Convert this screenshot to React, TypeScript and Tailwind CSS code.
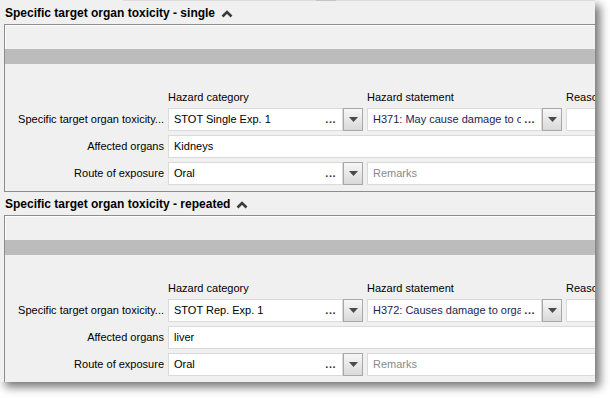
import React from "react";

const FONT = "font-['Liberation_Sans',Arial,sans-serif]";

function Chevron() {
  return (
    <svg width="12" height="9" viewBox="0 0 12 9" className="ml-[6px] mt-[1px]">
      <polyline points="1.5,7.5 6,3 10.5,7.5" fill="none" stroke="#3a3a3a" strokeWidth="2.6" />
    </svg>
  );
}

function DropButton() {
  return (
    <div className="flex h-full w-[20px] shrink-0 items-center justify-center border border-[#a8a8a8] bg-gradient-to-b from-[#f7f7f7] to-[#d9d9d9]">
      <svg width="9" height="5" viewBox="0 0 9 5">
        <polygon points="0,0 9,0 4.5,5" fill="#4a4a4a" />
      </svg>
    </div>
  );
}

function Combo({ value, tone = "text-black" }: { value: string; tone?: string }) {
  return (
    <div className="flex h-[23px] w-[195px]">
      <div className="flex min-w-0 flex-1 items-center border border-[#dadada] bg-white pl-[5px] pr-[6px]">
        <span className={`min-w-0 flex-1 overflow-hidden whitespace-nowrap ${tone}`}>{value}</span>
        <span className="ml-[3px] font-bold tracking-[0.5px] text-[#333]">...</span>
      </div>
      <DropButton />
    </div>
  );
}

function TextBox({ value, placeholder }: { value?: string; placeholder?: string }) {
  return (
    <div className="flex h-[23px] items-center border border-[#dadada] bg-white pl-[5px]">
      {value ? <span>{value}</span> : <span className="text-[#8a8a8a]">{placeholder}</span>}
    </div>
  );
}

function Section({
  title,
  category,
  statement,
  organ,
}: {
  title: string;
  category: string;
  statement: string;
  organ: string;
}) {
  return (
    <section>
      <div className="flex h-[23px] items-center pl-[5px] text-[12px] font-bold text-black">
        <span>{title}</span>
        <Chevron />
      </div>
      <div className="ml-[4px] w-[720px] border border-[#8d8d8d] bg-[#f0f0f0]">
        <div className="h-[24px] border-l border-t border-white" />
        <div className="h-[15px] bg-[#bcbcbc]" />
        <div className="grid grid-cols-[159px_195px_195px_1fr] gap-x-[4px] gap-y-[4px] pb-[6px] pt-[26px] text-[11px] text-black">
          <div />
          <div className="h-[14px] leading-[14px]">Hazard category</div>
          <div className="h-[14px] leading-[14px]">Hazard statement</div>
          <div className="h-[14px] leading-[14px]">Reason for no classification</div>

          <div className="flex items-center justify-end">Specific target organ toxicity...</div>
          <Combo value={category} />
          <Combo value={statement} tone="text-[#1d1d4f]" />
          <TextBox placeholder="" />

          <div className="flex items-center justify-end">Affected organs</div>
          <div className="col-span-3">
            <TextBox value={organ} />
          </div>

          <div className="flex items-center justify-end">Route of exposure</div>
          <Combo value="Oral" />
          <div className="col-span-2">
            <TextBox placeholder="Remarks" />
          </div>
        </div>
      </div>
    </section>
  );
}

export default function App() {
  return (
    <div className={`h-[398px] w-[610px] overflow-hidden bg-white ${FONT}`}>
      <div className="h-[382px] w-[595px] overflow-hidden bg-[#f0f0f0] shadow-[5px_5px_9px_rgba(0,0,0,0.55)]">
        <div className="flex h-px">
          <div className="w-[123px]" />
          <div className="w-[193px] bg-[#dcdcdc]" />
          <div className="w-[20px] bg-[#c4c4c4]" />
          <div className="flex-1 bg-[#dcdcdc]" />
        </div>
        <Section
          title="Specific target organ toxicity - single"
          category="STOT Single Exp. 1"
          statement="H371: May cause damage to o"
          organ="Kidneys"
        />
        <Section
          title="Specific target organ toxicity - repeated"
          category="STOT Rep. Exp. 1"
          statement="H372: Causes damage to orga"
          organ="liver"
        />
      </div>
    </div>
  );
}
